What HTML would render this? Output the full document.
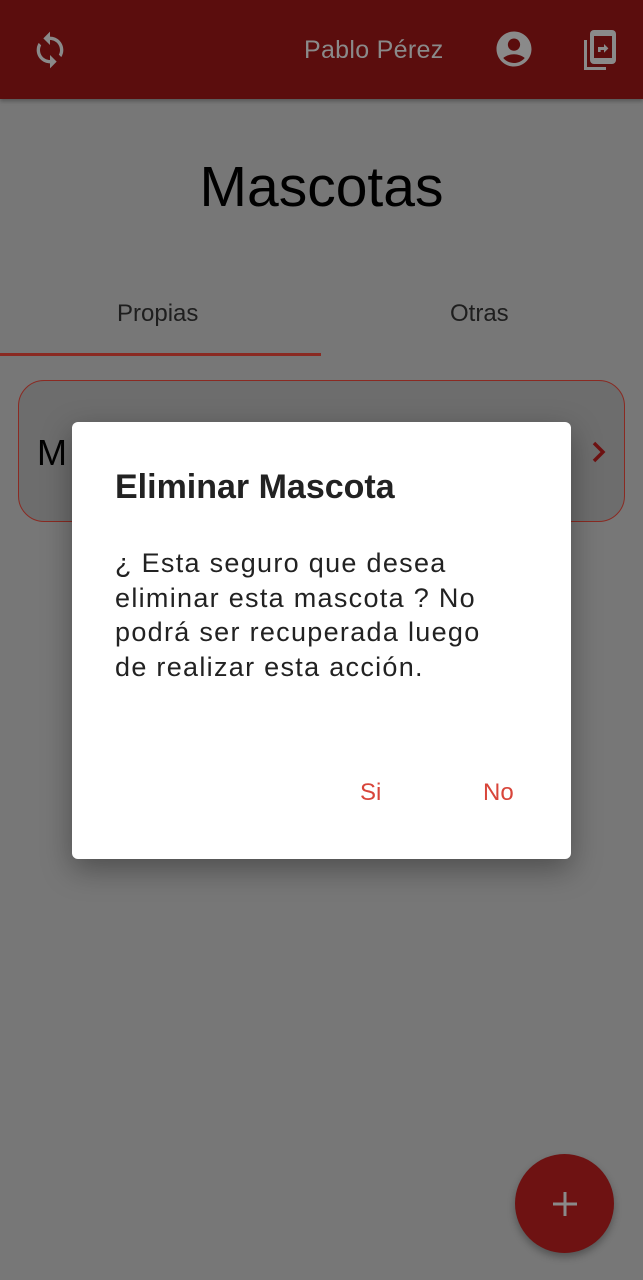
<!DOCTYPE html>
<html><head><meta charset="utf-8"><style>
*{margin:0;padding:0;box-sizing:border-box}
body{width:643px;height:1280px;background:#777777;font-family:"Liberation Sans",sans-serif;position:relative;overflow:hidden}
.bar{position:absolute;left:0;top:0;width:643px;height:99px;background:#5b0d0d;box-shadow:0 2px 4px rgba(0,0,0,.3)}
.name{position:absolute;left:304px;top:36px;font-size:25px;color:#8a8a8a;letter-spacing:.3px}
h1{position:absolute;top:154px;width:643px;text-align:center;font-size:57px;font-weight:normal;color:#000}
.tab{position:absolute;top:300px;font-size:24px;color:#1e1e1e}
.ul{position:absolute;left:0;top:353px;width:321px;height:3px;background:#8a2a22}
.card{position:absolute;left:18px;top:380px;width:607px;height:142px;border:1.5px solid #8a2a22;border-radius:26px;background:#6d6d6d}
.cardt{position:absolute;left:37px;top:432px;font-size:36px;color:#000}
.dlg{position:absolute;left:72px;top:422px;width:499px;height:437px;background:#fff;border-radius:6px;box-shadow:0 10px 30px rgba(0,0,0,.35)}
.dt{position:absolute;left:43px;top:46px;font-size:34px;font-weight:bold;color:#222}
.db{position:absolute;left:43px;top:124px;width:390px;font-size:27px;line-height:34.5px;color:#222;letter-spacing:1.3px}
.btn{position:absolute;top:357px;font-size:24px;color:#d8453a}
.fab{position:absolute;left:515px;top:1154px;width:99px;height:99px;border-radius:50%;background:#6e1212;box-shadow:0 4px 8px rgba(0,0,0,.3)}
</style></head><body>
<div class="bar">
<svg style="position:absolute;left:30px;top:30px" width="40" height="40" viewBox="0 0 24 24"><path fill="#8a8a8a" d="M12 4V1L8 5l4 4V6c3.31 0 6 2.690 6 6 0 1.01-.25 1.97-.7 2.8l1.46 1.46A7.93 7.93 0 0020 12c0-4.420-3.58-8-8-8zm0 14c-3.31 0-6-2.69-6-6 0-1.01.25-1.97.7-2.8L5.24 7.74A7.93 7.930 0 004 12c0 4.42 3.58 8 8 8v3l4-4-4-4v3z"/></svg>
<div class="name">Pablo Pérez</div>
<svg style="position:absolute;left:493px;top:28px" width="42" height="42" viewBox="0 0 24 24"><path fill="#8a8a8a" d="M12 2C6.48 2 2 6.48 2 12s4.48 10 10 10 10-4.48 10-10S17.52 2 12 2zm0 4c1.93 0 3.5 1.57 3.5 3.5S13.93 13 12 13s-3.5-1.57-3.5-3.5S10.07 6 12 6zm0 14c-2.03 0-4.43-.82-6.140-2.88C7.55 15.8 9.68 15 12 15s4.45.8 6.14 2.12C16.43 19.18 14.03 20 12 20z"/></svg>
<svg style="position:absolute;left:582px;top:28px" width="36" height="44" viewBox="0 0 18 22"><path fill="#8a8a8a" d="M1 6h1.5v13.5H12V21H1z"/><rect x="4" y="1" width="13" height="17" rx="2" fill="#8a8a8a"/><rect x="6" y="4" width="9" height="11" fill="#5b0d0d"/><path fill="#8a8a8a" d="M8 12v-2.5h3V8l2.2 2.2L11 12.4V11H9.3v1z"/></svg>
</div>
<h1>Mascotas</h1>
<div class="tab" style="left:117px">Propias</div>
<div class="tab" style="left:450px">Otras</div>
<div class="ul"></div>
<div class="card"></div>
<div class="cardt">M</div>
<svg style="position:absolute;left:588px;top:440px" width="22" height="24" viewBox="0 0 22 24"><path d="M6 3l9 9-9 9" stroke="#6e1212" stroke-width="3.5" fill="none"/></svg>
<div class="dlg">
<div class="dt">Eliminar Mascota</div>
<div class="db">¿ Esta seguro que desea eliminar esta mascota ? No podrá ser recuperada luego de realizar esta acción.</div>
<div class="btn" style="left:288px">Si</div>
<div class="btn" style="left:411px">No</div>
</div>
<div class="fab"><svg style="position:absolute;left:36px;top:36px" width="28" height="28" viewBox="0 0 28 28"><path d="M14 2v24M2 14h24" stroke="#8a8a8a" stroke-width="3"/></svg></div>
</body></html>
